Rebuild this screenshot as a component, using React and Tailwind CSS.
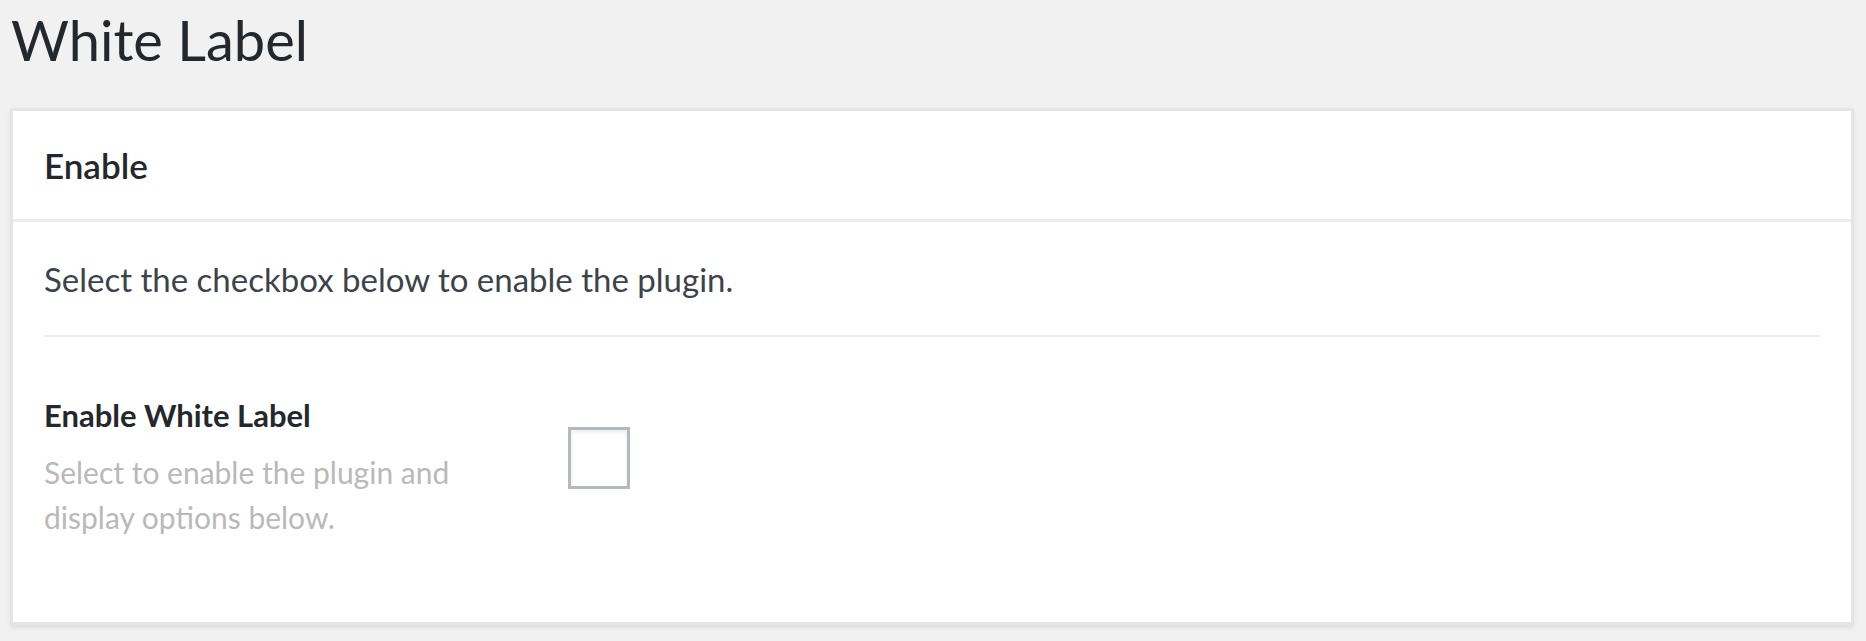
export default function App() {
  return (
    <div className="min-h-[641px] bg-[#f1f1f1] font-['Lato',sans-serif] overflow-hidden">
      <h1 className="pl-[11px] pt-[4px] text-[56px] leading-[72px] font-normal text-[#23282d]">
        White Label
      </h1>
      <div className="mt-[32px] ml-[10px] mr-[12px] border-[3px] border-[#e5e5e5] bg-white shadow-[0_3px_4px_rgba(0,0,0,0.07)]">
        <div className="border-b-[3px] border-[#ececec] px-[31px] py-[30px]">
          <h2 className="text-[35px] leading-[48px] font-semibold text-[#23282d]">Enable</h2>
        </div>
        <div className="px-[31px] pt-[33px] pb-[82px]">
          <p className="text-[33px] leading-[48px] text-[#3c434a]">
            Select the checkbox below to enable the plugin.
          </p>
          <div className="mt-[32px] h-[2px] bg-[#ededed]" />
          <div className="mt-[60px] flex items-start">
            <div className="w-[450px] mr-[74px]">
              <div className="text-[31px] leading-[36px] font-bold text-[#23282d]">Enable White Label</div>
              <div className="mt-[17px] text-[30px] leading-[45px] text-[#b9b9b9]">
                Select to enable the plugin and display options below.
              </div>
            </div>
            <div className="mt-[30px] h-[62px] w-[62px] border-[3px] border-[#b4b9be] bg-white shadow-[inset_0_2px_4px_rgba(0,0,0,0.08)]" />
          </div>
        </div>
      </div>
    </div>
  );
}
